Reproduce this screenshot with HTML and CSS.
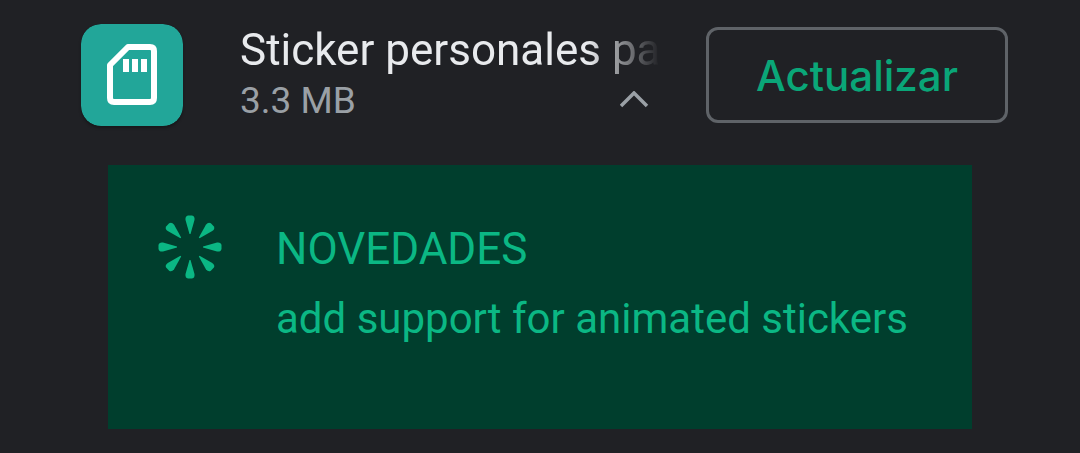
FILE: index.html
```html
<!DOCTYPE html>
<html lang="es">
<head>
  <meta charset="UTF-8">
  <title>Sticker personales</title>
  <link rel="stylesheet" href="styles.css">
</head>
<body>

  <div class="app">
    <svg class="app-icon" viewBox="0 0 102 102" aria-hidden="true">
      <rect width="102" height="102" rx="20" fill="#22a699"/>
      <path d="M47 23H69Q73 23 73 27V74Q73 78 69 78H33Q29 78 29 74V41Z" fill="none" stroke="#fff" stroke-width="6" stroke-linejoin="round"/>
      <path d="M42 35h6v13h-6zM51 35h6v13h-6zM60 35h6v13h-6z" fill="#fff"/>
    </svg>

    <div class="info">
      <div class="name">Sticker personales pa</div>
      <div class="details">
        <span class="size">3.3 MB</span>
        <button class="toggle" type="button" aria-label="Ocultar novedades">
          <svg width="30" height="20" viewBox="0 0 30 20" aria-hidden="true">
            <path d="M1 15L14 2L27 15" fill="none" stroke="#9aa0a6" stroke-width="3.5"/>
          </svg>
        </button>
      </div>
    </div>

    <button class="update" type="button">Actualizar</button>
  </div>

  <div class="news">
    <svg class="news-icon" viewBox="-32 -32 64 64" aria-hidden="true">
      <defs>
        <path id="ray" d="M-0.5 -13L-4.5 -27Q-5 -31 -2 -31.5H2Q5 -31 4.5 -27L0.5 -13Z"/>
      </defs>
      <g fill="#0bb784">
        <use href="#ray"/>
        <use href="#ray" transform="rotate(45)"/>
        <use href="#ray" transform="rotate(90)"/>
        <use href="#ray" transform="rotate(135)"/>
        <use href="#ray" transform="rotate(180)"/>
        <use href="#ray" transform="rotate(225)"/>
        <use href="#ray" transform="rotate(270)"/>
        <use href="#ray" transform="rotate(315)"/>
      </g>
    </svg>
    <div class="news-text">
      <h2>NOVEDADES</h2>
      <p>add support for animated stickers</p>
    </div>
  </div>

</body>
</html>
```

FILE: styles.css
```css
body {
  margin: 0;
  background: #202125;
  font-family: Roboto, sans-serif;
}
.app {
  display: flex;
  align-items: center;
  padding: 24px 72px 0 81px;
}
.app-icon {
  flex: none;
  width: 102px;
  height: 102px;
  margin-right: 57px;
  border-radius: 20px;
  box-shadow: 0 2px 3px rgba(0, 0, 0, 0.3);
}
.info {
  flex: 1;
  min-width: 0;
  margin-right: 46px;
}
.name {
  overflow: hidden;
  white-space: nowrap;
  color: #e8eaed;
  font-size: 44px;
  line-height: 52px;
  -webkit-mask-image: linear-gradient(to left, transparent, #000 72px);
  mask-image: linear-gradient(to left, transparent, #000 72px);
}
.details {
  display: flex;
  align-items: center;
  justify-content: space-between;
  padding-right: 10px;
}
.size {
  color: #9aa0a6;
  font-size: 37px;
  line-height: 50px;
}
.toggle {
  display: flex;
  padding: 0;
  border: none;
  background: none;
}
.update {
  flex: none;
  min-width: 302px;
  height: 96px;
  border: 3px solid #5f6368;
  border-radius: 12px;
  background: none;
  color: #0aa678;
  font-family: Inter, sans-serif;
  font-size: 42px;
  font-weight: 500;
}
.news {
  display: flex;
  align-items: flex-start;
  margin: 39px 108px 24px;
  padding: 50px 50px 84px;
  background: #003e2d;
  color: #0bb784;
}
.news-icon {
  flex: none;
  width: 64px;
  height: 64px;
  margin-right: 54px;
}
.news-text {
  padding-top: 8px;
}
h2,
p {
  margin: 0;
  font-weight: 400;
  line-height: 52px;
}
h2 {
  font-size: 44px;
}
p {
  margin-top: 18px;
  font-size: 42px;
}
```
